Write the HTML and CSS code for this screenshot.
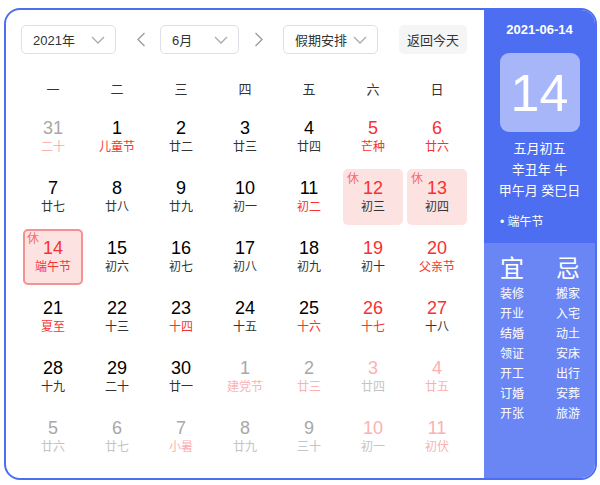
FILE: index.html
```html
<!DOCTYPE html>
<html lang="zh-CN">
<head>
    <meta charset="UTF-8">
    <meta name="viewport" content="width=device-width, initial-scale=1.0">
    <title>万年历</title>
    <link rel="stylesheet" href="styles.css">
</head>
<body>
    <div class="calendar">
        <div class="main">
            <div class="toolbar">
                <div class="select select-year">
                    <span>2021年</span>
                    <svg class="chevron" width="14" height="8" viewBox="0 0 14 8"><path d="M1 1 L7 7 L13 1" fill="none" stroke="#a8abb2" stroke-width="1.3"/></svg>
                </div>
                <div class="nav-arrow nav-prev">
                    <svg width="8" height="15" viewBox="0 0 8 15"><path d="M7.5 1 L1 7.5 L7.5 14" fill="none" stroke="#9a9ca3" stroke-width="1.4"/></svg>
                </div>
                <div class="select select-month">
                    <span>6月</span>
                    <svg class="chevron" width="14" height="8" viewBox="0 0 14 8"><path d="M1 1 L7 7 L13 1" fill="none" stroke="#a8abb2" stroke-width="1.3"/></svg>
                </div>
                <div class="nav-arrow nav-next">
                    <svg width="8" height="15" viewBox="0 0 8 15"><path d="M0.5 1 L7 7.5 L0.5 14" fill="none" stroke="#9a9ca3" stroke-width="1.4"/></svg>
                </div>
                <div class="select select-holiday">
                    <span>假期安排</span>
                    <svg class="chevron" width="14" height="8" viewBox="0 0 14 8"><path d="M1 1 L7 7 L13 1" fill="none" stroke="#a8abb2" stroke-width="1.3"/></svg>
                </div>
                <button class="today-btn">返回今天</button>
            </div>

            <div class="weekdays">
                <span>一</span><span>二</span><span>三</span><span>四</span><span>五</span><span>六</span><span>日</span>
            </div>

            <div class="days" id="days"></div>
        </div>

        <div class="side">
            <div class="side-top">
                <div class="side-date">2021-06-14</div>
                <div class="big-day">14</div>
                <div class="lunar-info">
                    <div>五月初五</div>
                    <div>辛丑年 牛</div>
                    <div>甲午月 癸巳日</div>
                </div>
                <div class="festival">• 端午节</div>
            </div>
            <div class="side-bottom">
                <div class="almanac">
                    <div class="almanac-col">
                        <div class="almanac-title">宜</div>
                        <div>装修</div>
                        <div>开业</div>
                        <div>结婚</div>
                        <div>领证</div>
                        <div>开工</div>
                        <div>订婚</div>
                        <div>开张</div>
                    </div>
                    <div class="almanac-col">
                        <div class="almanac-title">忌</div>
                        <div>搬家</div>
                        <div>入宅</div>
                        <div>动土</div>
                        <div>安床</div>
                        <div>出行</div>
                        <div>安葬</div>
                        <div>旅游</div>
                    </div>
                </div>
            </div>
        </div>
    </div>

    <script>
        // [día, lunar, clases]
        const dias = [
            ['31', '二十', 'other lunar-red'], ['1', '儿童节', 'lunar-red'], ['2', '廿二', ''], ['3', '廿三', ''], ['4', '廿四', ''], ['5', '芒种', 'num-red lunar-red'], ['6', '廿六', 'num-red lunar-red'],
            ['7', '廿七', ''], ['8', '廿八', ''], ['9', '廿九', ''], ['10', '初一', ''], ['11', '初二', 'lunar-red'], ['12', '初三', 'num-red rest'], ['13', '初四', 'num-red rest'],
            ['14', '端午节', 'num-red lunar-red rest selected'], ['15', '初六', ''], ['16', '初七', ''], ['17', '初八', ''], ['18', '初九', ''], ['19', '初十', 'num-red'], ['20', '父亲节', 'num-red lunar-red'],
            ['21', '夏至', 'lunar-red'], ['22', '十三', ''], ['23', '十四', 'lunar-red'], ['24', '十五', ''], ['25', '十六', 'lunar-red'], ['26', '十七', 'num-red lunar-red'], ['27', '十八', 'num-red'],
            ['28', '十九', ''], ['29', '二十', ''], ['30', '廿一', ''], ['1', '建党节', 'other lunar-red'], ['2', '廿三', 'other lunar-red'], ['3', '廿四', 'other num-red'], ['4', '廿五', 'other num-red lunar-red'],
            ['5', '廿六', 'other'], ['6', '廿七', 'other'], ['7', '小暑', 'other lunar-red'], ['8', '廿九', 'other'], ['9', '三十', 'other'], ['10', '初一', 'other num-red'], ['11', '初伏', 'other num-red lunar-red']
        ];

        const contenedor = document.getElementById('days');
        dias.forEach(([dia, lunar, clases]) => {
            const celda = document.createElement('div');
            celda.className = 'day ' + clases;
            let html = '<div class="day-box">';
            if (clases.includes('rest')) html += '<span class="rest-tag">休</span>';
            html += `<span class="num">${dia}</span><span class="lunar">${lunar}</span></div>`;
            celda.innerHTML = html;
            contenedor.appendChild(celda);
        });
    </script>
</body>
</html>
```

FILE: styles.css
```css
* {
    box-sizing: border-box;
}

body {
    margin: 0;
    font-family: "Liberation Sans", "Noto Sans CJK SC", sans-serif;
    background-color: #fff;
    color: #333;
}

.calendar {
    display: flex;
    width: 593px;
    height: 472px;
    margin: 8px 0 0 4px;
    border: 2px solid #4e6ef2;
    border-radius: 16px;
    overflow: hidden;
    background-color: #fff;
}

.main {
    width: 478px;
    padding: 15px 15px 0 15px;
}

.toolbar {
    display: flex;
    align-items: center;
    height: 29px;
    margin-bottom: 19px;
}

.select {
    display: flex;
    align-items: center;
    justify-content: space-between;
    height: 29px;
    padding: 0 10px 0 11px;
    border: 1px solid #dcdfe6;
    border-radius: 5px;
    font-size: 13px;
    color: #333;
}

.select-year,
.select-holiday {
    width: 95px;
}

.select-month {
    width: 79px;
}

.chevron {
    display: block;
}

.nav-arrow {
    display: flex;
    align-items: center;
}

.nav-prev {
    margin: 0 15px 0 21px;
}

.nav-next {
    margin: 0 20px 0 16px;
}

.today-btn {
    margin-left: 21px;
    width: 68px;
    height: 29px;
    padding: 0;
    border: none;
    border-radius: 5px;
    background-color: #f5f5f6;
    font-family: inherit;
    font-size: 13px;
    color: #333;
}

.weekdays {
    display: grid;
    grid-template-columns: repeat(7, 64px);
    height: 30px;
    margin-bottom: 4px;
    font-size: 13px;
    color: #333;
}

.weekdays span {
    display: flex;
    align-items: center;
    justify-content: center;
}

.days {
    display: grid;
    grid-template-columns: repeat(7, 64px);
    grid-auto-rows: 60px;
}

.day {
    padding: 2px;
}

.day-box {
    position: relative;
    display: flex;
    flex-direction: column;
    align-items: center;
    justify-content: center;
    height: 100%;
    border-radius: 5px;
}

.num {
    font-size: 18px;
    line-height: 21px;
    color: #000;
}

.lunar {
    font-size: 12px;
    line-height: 17px;
    color: #333;
}

.num-red .num,
.lunar-red .lunar {
    color: #f73131;
}

.other .num {
    color: #a8a8a8;
}

.other .lunar {
    color: #c4c4c4;
}

.other.num-red .num,
.other.lunar-red .lunar {
    color: #fbb1b1;
}

.rest .day-box {
    background-color: #fde2e2;
}

.selected .day-box {
    border: 2px solid #f59191;
}

.rest-tag {
    position: absolute;
    top: 3px;
    left: 4px;
    font-size: 12px;
    line-height: 14px;
    color: #f56c6c;
}

.selected .rest-tag {
    top: 1px;
    left: 2px;
}

.side {
    display: flex;
    flex-direction: column;
    width: 111px;
    color: #fff;
}

.side-top {
    display: flex;
    flex-direction: column;
    align-items: center;
    height: 233px;
    padding-top: 11px;
    background-color: #4e6ef2;
}

.side-date {
    font-size: 13px;
    line-height: 18px;
    font-weight: bold;
}

.big-day {
    display: flex;
    align-items: center;
    justify-content: center;
    width: 80px;
    height: 79px;
    margin-top: 14px;
    border-radius: 9px;
    background-color: #a7b6f8;
    font-size: 52px;
}

.lunar-info {
    margin-top: 6px;
    font-size: 13px;
    line-height: 21px;
    text-align: center;
}

.festival {
    align-self: flex-start;
    margin: 12px 0 0 16px;
    font-size: 12px;
    line-height: 18px;
}

.side-bottom {
    flex: 1;
    padding: 11px 0 0 16px;
    background-color: #6a86f4;
}

.almanac {
    display: flex;
    gap: 32px;
}

.almanac-col {
    font-size: 12px;
    line-height: 20px;
    text-align: center;
}

.almanac-title {
    font-size: 24px;
    line-height: 30px;
}
```
